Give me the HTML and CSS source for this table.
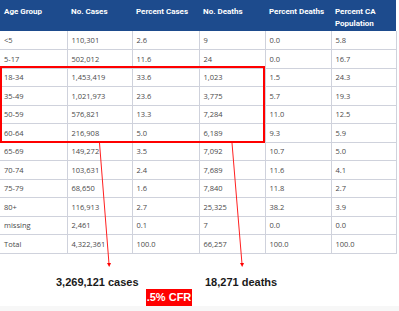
FILE: index.html
```html
<!DOCTYPE html>
<html>
<head>
<meta charset="utf-8">
<link rel="stylesheet" href="styles.css">
</head>
<body>
<div class="page">
  <table class="data">
    <colgroup>
      <col class="c1"><col class="c2"><col class="c3"><col class="c4"><col class="c5"><col class="c6">
    </colgroup>
    <thead>
      <tr>
        <th>Age Group</th><th>No. Cases</th><th>Percent Cases</th><th>No. Deaths</th><th>Percent Deaths</th><th>Percent CA Population</th>
      </tr>
    </thead>
    <tbody>
      <tr><td>&lt;5</td><td>110,301</td><td>2.6</td><td>9</td><td>0.0</td><td>5.8</td></tr>
      <tr><td>5-17</td><td>502,012</td><td>11.6</td><td>24</td><td>0.0</td><td>16.7</td></tr>
      <tr><td>18-34</td><td>1,453,419</td><td>33.6</td><td>1,023</td><td>1.5</td><td>24.3</td></tr>
      <tr><td>35-49</td><td>1,021,973</td><td>23.6</td><td>3,775</td><td>5.7</td><td>19.3</td></tr>
      <tr><td>50-59</td><td>576,821</td><td>13.3</td><td>7,284</td><td>11.0</td><td>12.5</td></tr>
      <tr><td>60-64</td><td>216,908</td><td>5.0</td><td>6,189</td><td>9.3</td><td>5.9</td></tr>
      <tr><td>65-69</td><td>149,272</td><td>3.5</td><td>7,092</td><td>10.7</td><td>5.0</td></tr>
      <tr><td>70-74</td><td>103,631</td><td>2.4</td><td>7,689</td><td>11.6</td><td>4.1</td></tr>
      <tr><td>75-79</td><td>68,650</td><td>1.6</td><td>7,840</td><td>11.8</td><td>2.7</td></tr>
      <tr><td>80+</td><td>116,913</td><td>2.7</td><td>25,325</td><td>38.2</td><td>3.9</td></tr>
      <tr><td>missing</td><td>2,461</td><td>0.1</td><td>7</td><td>0.0</td><td>0.0</td></tr>
      <tr><td>Total</td><td>4,322,361</td><td>100.0</td><td>66,257</td><td>100.0</td><td>100.0</td></tr>
    </tbody>
  </table>

  <div class="summary">
    <div class="totals">
      <span class="cases">3,269,121 cases</span>
      <span class="deaths">18,271 deaths</span>
    </div>
    <div class="cfr">.5% CFR</div>
  </div>
  <div class="footer-band"></div>

  <svg class="marks" width="399" height="311" viewBox="0 0 399 311" aria-hidden="true">
    <rect x="1" y="67" width="263" height="75" fill="none" stroke="#ff0000" stroke-width="2"/>
    <line x1="99.5" y1="143" x2="109" y2="264" stroke="#ff2020" stroke-width="1"/>
    <polygon points="107,263 111,263 109.2,267" fill="#ff0000"/>
    <line x1="232" y1="143" x2="242" y2="264" stroke="#ff2020" stroke-width="1"/>
    <polygon points="240,263 244,263 242.2,267" fill="#ff0000"/>
  </svg>
</div>
</body>
</html>
```

FILE: styles.css
```css
html, body {
  margin: 0;
  padding: 0;
  background: #ffffff;
}

.page {
  position: relative;
  width: 399px;
  height: 311px;
  overflow: hidden;
}

.data {
  width: 396px;
  border-collapse: collapse;
  table-layout: fixed;
}

.c1 { width: 67px; }
.c2 { width: 65px; }
.c3 { width: 67px; }
.c4 { width: 66px; }
.c5 { width: 66px; }
.c6 { width: 65px; }

.data th {
  background: #1d4b8d;
  color: #ffffff;
  font-family: Roboto, "Liberation Sans", sans-serif;
  font-weight: 700;
  font-size: 8px;
  line-height: 12px;
  text-align: left;
  vertical-align: top;
  padding: 6px 4px 0 4px;
  height: 25px;
  box-sizing: content-box;
}

.data td {
  font-family: "Open Sans", "Liberation Sans", sans-serif;
  font-size: 7.5px;
  color: #4a4a4a;
  height: 18.5px;
  padding: 0 4px;
  line-height: 10px;
  border: 1px solid #cfd2dc;
  box-sizing: border-box;
  vertical-align: middle;
  white-space: nowrap;
}

.data td:first-child {
  border-left: none;
}

.data tbody tr:first-child td {
  border-top: none;
}

.summary {
  padding-top: 22px;
  font-family: "Liberation Sans", Arial, sans-serif;
  font-weight: 700;
  font-size: 11px;
  color: #1a1a1a;
}

.totals {
  display: grid;
  grid-template-columns: 149px auto;
  padding-left: 56px;
  line-height: 13px;
}

.cfr {
  margin-left: 146px;
  width: 46px;
  height: 17px;
  line-height: 17px;
  background: #ff0000;
  color: #ffffff;
  text-align: center;
  font-size: 11px;
}

.footer-band {
  position: absolute;
  left: 0;
  right: 0;
  bottom: 0;
  height: 5px;
  background: #f7f7f7;
}

.marks {
  position: absolute;
  left: 0;
  top: 0;
  pointer-events: none;
}
```
